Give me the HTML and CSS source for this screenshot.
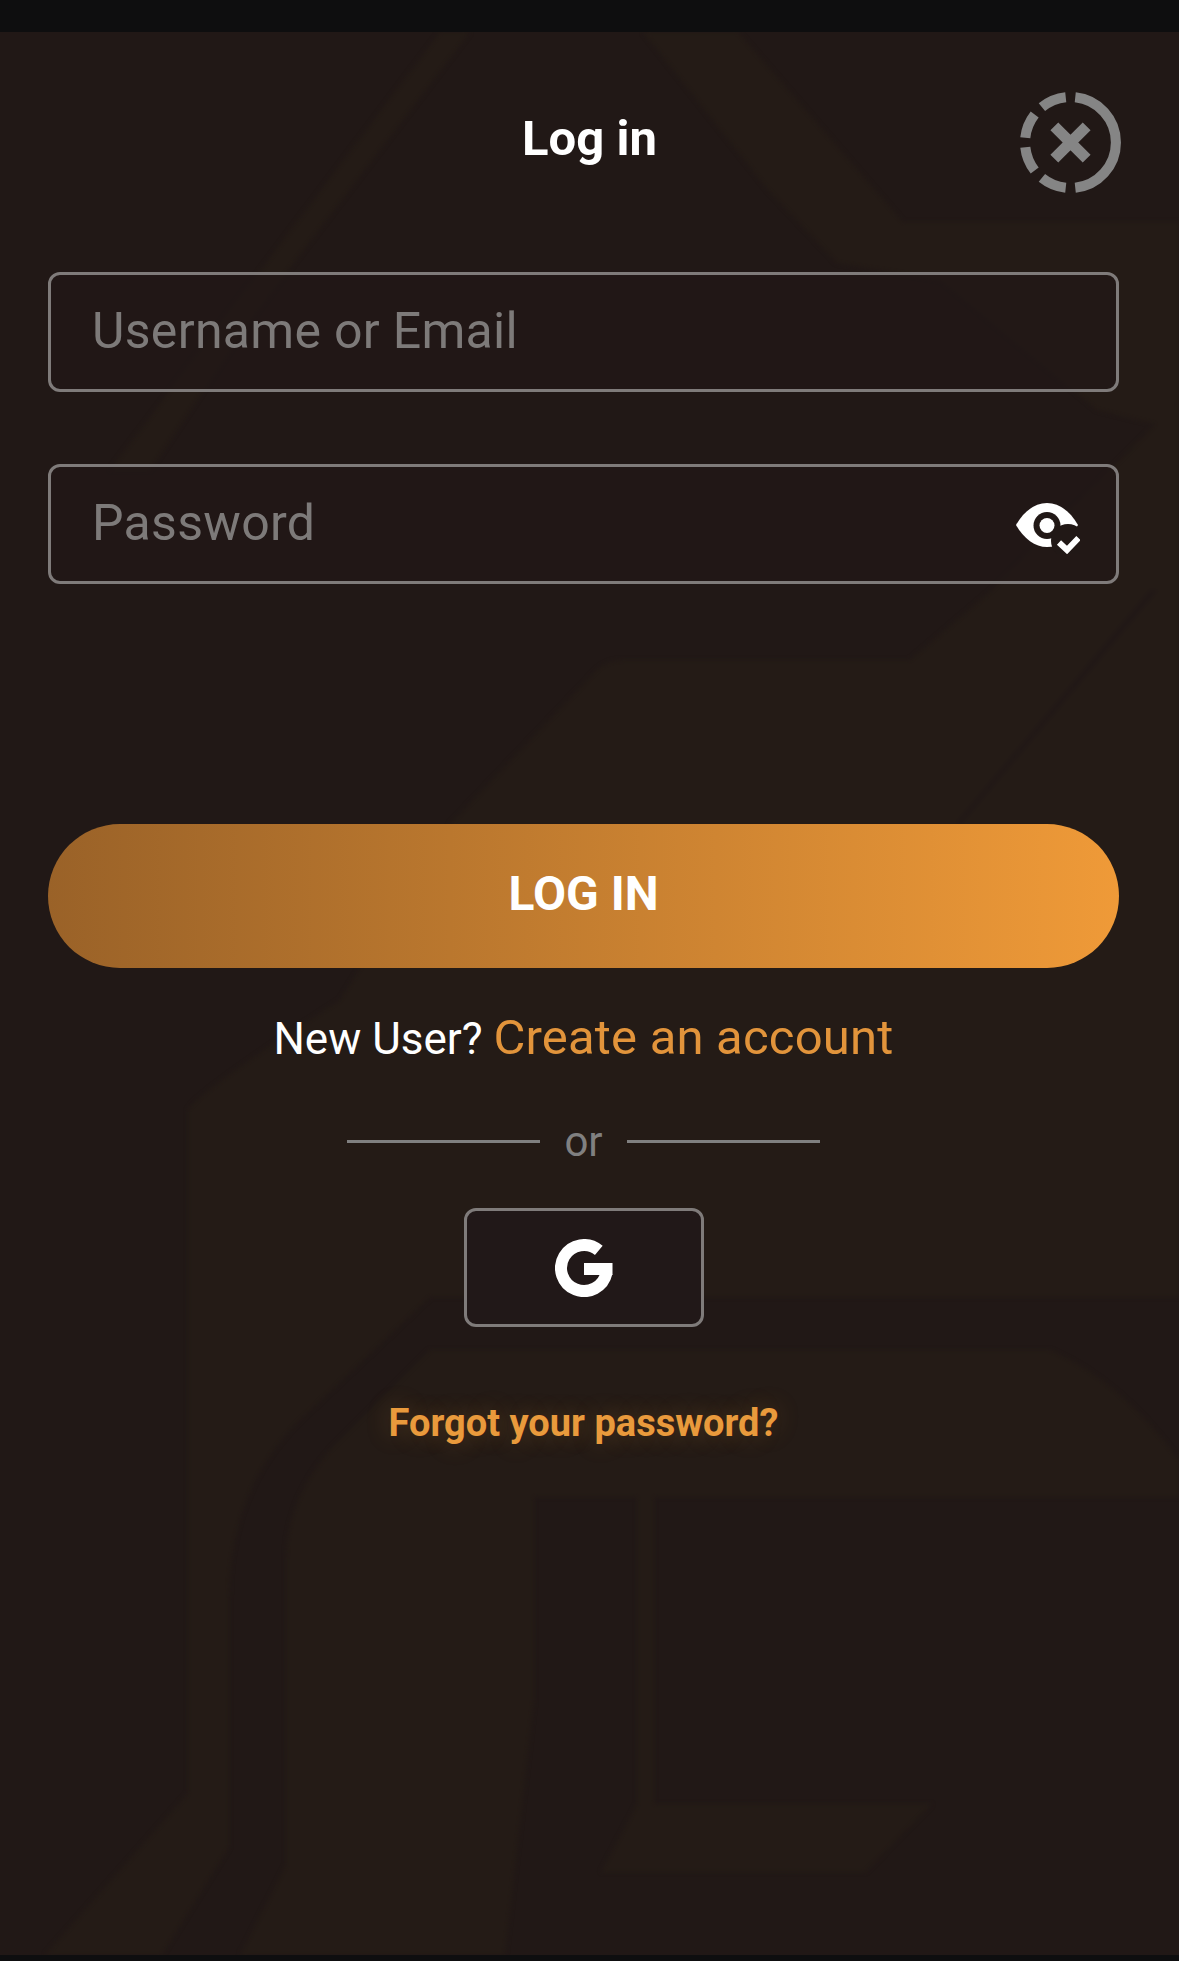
FILE: index.html
```html
<!DOCTYPE html>
<html lang="en">
<head>
  <meta charset="UTF-8">
  <title>Log in</title>
  <link rel="stylesheet" href="styles.css">
</head>
<body>

<div class="topbar"></div>

<main class="pantalla">
  <svg class="fondo" viewBox="0 0 1179 1923" preserveAspectRatio="none" aria-hidden="true">
    <g transform="translate(0 -32)">
      <path class="claro" d="M440 32H470L250 320 150 470 110 470Z"/>
      <path class="claro" d="M643 32H738L903 222H1179V430L1097 410 941 280 837 263 768 190Z"/>
      <path class="claro" d="M45 1955 188 1793V1110Q200 1090 340 1000L451 823 594 673Q605 660 624 660H910L992 590 1179 400V1297H430L300 1420Q229 1490 229 1600V1847L162 1955Z"/>
      <path class="claro" d="M240 1955 286 1865V1560Q286 1500 330 1450L430 1350H1050Q1120 1380 1179 1460V1497H654V1804H932L865 1872H601L637 1804V1497H534V1700L505 1955Z"/>
      <path class="oscuro" d="M1158 590 962 823H956L1150 590Z"/>
    </g>
  </svg>

  <header class="cabecera">
    <span></span>
    <h1>Log in</h1>
    <button class="cerrar" type="button" aria-label="Close">
      <svg viewBox="0 0 100 100" width="101" height="101">
        <g class="aro">
          <path d="M54.7 5.25A45 45 0 0 1 54.7 94.75"/>
          <path d="M45.3 94.75A45 45 0 0 1 21.68 84.97"/>
          <path d="M14.54 77.71A45 45 0 0 1 5.25 54.7"/>
          <path d="M5.25 45.3A45 45 0 0 1 14.54 22.29"/>
          <path d="M21.68 15.03A45 45 0 0 1 45.3 5.25"/>
        </g>
        <path class="equis" d="M34 34 66 66M66 34 34 66"/>
      </svg>
    </button>
  </header>

  <form class="formulario">
    <div class="campo">
      <input type="text" placeholder="Username or Email">
    </div>
    <div class="campo">
      <input type="password" placeholder="Password">
      <svg class="ojo" viewBox="0 0 64 51" width="64" height="51" aria-hidden="true">
        <path class="blanco" d="M0 22C8 8 19 0 31 0S54 8 62 22C54 36 43 44 31 44S8 36 0 22Z"/>
        <circle class="hueco" cx="31" cy="22.5" r="13.5"/>
        <circle class="blanco" cx="31" cy="22.5" r="7.5"/>
        <circle class="hueco" cx="52" cy="38" r="17"/>
        <path class="visto" d="M43 39.5 51 47 62.500 35"/>
      </svg>
    </div>

    <button class="entrar" type="button">LOG IN</button>

    <p class="registro">New User? <a href="#">Create an account</a></p>

    <div class="separador"><span>or</span></div>

    <button class="google" type="button" aria-label="Google">
      <svg viewBox="0 0 58 58" width="58" height="58">
        <path d="M43.800 11.400A23 23 0 1 0 51.500 34" fill="none" stroke="#fff" stroke-width="12"/>
        <rect x="29" y="24" width="28.500" height="12" fill="#fff"/>
      </svg>
    </button>

    <a class="olvido" href="#">Forgot your password?</a>
  </form>
</main>

<div class="bottombar"></div>

</body>
</html>
```

FILE: styles.css
```css
* {
  box-sizing: border-box;
}
html, body {
  height: 100%;
}
body {
  margin: 0;
  display: flex;
  flex-direction: column;
  background-color: #211816;
  color: white;
  font-family: 'Roboto', sans-serif;
}
.topbar {
  height: 32px;
  background-color: #0e0e0f;
}
.bottombar {
  height: 6px;
  background-color: #0e0e0f;
}
.pantalla {
  position: relative;
  flex: 1;
  overflow: hidden;
}
.fondo {
  position: absolute;
  top: 0;
  left: 0;
  width: 100%;
  height: 100%;
  filter: blur(2px);
}
.claro {
  fill: #241b16;
}
.oscuro {
  fill: #211816;
}
.cabecera {
  position: relative;
  display: grid;
  grid-template-columns: 1fr auto 1fr;
  align-items: flex-start;
  height: 240px;
  padding: 60px 58px 0;
}
h1 {
  margin: 17px 0 0;
  font-size: 49px;
  line-height: 60px;
  font-weight: 700;
}
.cerrar {
  justify-self: end;
  width: 101px;
  height: 101px;
  padding: 0;
  background: none;
  border: none;
}
.cerrar svg {
  display: block;
}
.aro path {
  fill: none;
  stroke: #858585;
  stroke-width: 10;
}
.equis {
  fill: none;
  stroke: #858585;
  stroke-width: 11;
}
.formulario {
  position: relative;
  display: flex;
  flex-direction: column;
  margin: 0 60px 0 48px;
}
.campo {
  position: relative;
  height: 120px;
  margin-bottom: 72px;
}
.campo input {
  width: 100%;
  height: 100%;
  padding: 0 41px 2px;
  background-color: rgba(33, 24, 24, 0.6);
  border: 3px solid #7f7b7a;
  border-radius: 12px;
  color: white;
  font-family: 'Roboto', sans-serif;
  font-size: 50px;
  letter-spacing: 0.3px;
  outline: none;
}
.campo input::placeholder {
  color: #7d7a79;
  opacity: 1;
}
.ojo {
  position: absolute;
  top: 39px;
  right: 39px;
}
.blanco {
  fill: white;
}
.hueco {
  fill: #211816;
}
.visto {
  fill: none;
  stroke: white;
  stroke-width: 6;
}
.entrar {
  height: 144px;
  margin-top: 168px;
  padding: 0 0 5px;
  background: linear-gradient(90deg, #9a6228, #ef9a38);
  border: none;
  border-radius: 72px;
  color: white;
  font-family: 'Roboto', sans-serif;
  font-size: 48px;
  font-weight: 700;
}
.registro {
  margin: 40px 0 0;
  font-size: 44px;
  line-height: 60px;
  text-align: center;
}
.registro a {
  color: #e2943b;
  font-size: 49px;
  letter-spacing: 0.2px;
  text-decoration: none;
}
.separador {
  display: flex;
  justify-content: center;
  align-items: center;
  gap: 24px;
  margin-top: 47px;
  height: 50px;
  color: #808080;
  font-size: 42px;
}
.separador::before, .separador::after {
  content: "";
  width: 193px;
  height: 3px;
  background-color: #808080;
}
.google {
  align-self: center;
  display: flex;
  justify-content: center;
  align-items: center;
  width: 240px;
  height: 119px;
  margin-top: 42px;
  padding: 0;
  background-color: #211818;
  border: 3px solid #7f7b7a;
  border-radius: 12px;
}
.olvido {
  align-self: center;
  margin-top: 73px;
  color: #e99a3c;
  font-size: 38px;
  line-height: 46px;
  font-weight: 700;
  text-decoration: none;
  text-shadow: 0 0 24px rgba(233, 154, 60, 0.25);
}
```
